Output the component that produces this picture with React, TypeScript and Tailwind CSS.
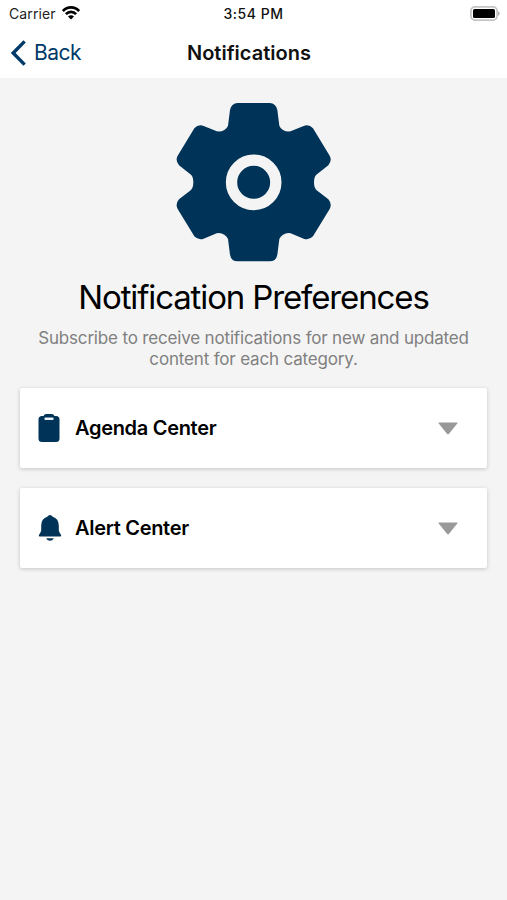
import type { ReactNode } from 'react';

interface CategoryCardProps {
  icon: ReactNode;
  label: string;
}

function StatusBar() {
  return (
    <div className="relative flex h-[28px] items-center justify-between pl-[9px] pr-[7px]">
      <div className="flex items-center gap-[6px]">
        <span className="text-[14px] leading-[20px] tracking-[0.12px] text-[#222]">Carrier</span>
        <svg className="-mt-[2px]" width="18" height="14" viewBox="0 0 18 14" fill="none" stroke="#000" strokeWidth="2.6">
          <path d="M0.9 5C5.4 0.2 12.6 0.2 17.1 5" />
          <path d="M3.9 8.2C6.8 5.1 11.2 5.1 14.1 8.2" />
          <path d="M9 13.6L6 10.6C7.7 8.8 10.3 8.8 12 10.6Z" fill="#000" stroke="none" />
        </svg>
      </div>
      <span className="absolute left-1/2 -translate-x-1/2 whitespace-nowrap text-[14px] font-medium leading-[20px] tracking-[0.5px] text-[#111]">
        3:54 PM
      </span>
      <svg className="-mt-[2px]" width="30" height="15" viewBox="0 0 30 15">
        <rect x="0.9" y="0.9" width="26.2" height="13.2" rx="4" fill="#fff" stroke="#c4c4c4" strokeWidth="1.8" />
        <rect x="3" y="3" width="22" height="9" rx="1.5" fill="#000" />
        <path d="M28 5.2C30.2 5.8 30.2 9.2 28 9.8Z" fill="#b0b0b0" />
      </svg>
    </div>
  );
}

function GearIcon() {
  return (
    <svg width="156" height="160" viewBox="33 20 468 480" fill="#003358">
      <path d="M218 23H314Q333 24 337 44L343 91Q346 99 354 104Q369 113 384 105L416 92Q432 86 444 99L494 181Q502 196 490 210L454 238Q447 245 447 261Q447 277 454 284L490 312Q502 326 494 341L444 423Q432 436 416 430L384 417Q369 409 354 418Q346 423 343 431L337 478Q333 498 314 498H218Q199 498 195 478L189 431Q186 423 178 418Q163 409 148 417L116 430Q100 436 88 423L38 341Q30 326 42 312L78 284Q85 277 85 261Q85 245 78 238L42 210Q30 196 38 181L88 99Q100 86 116 92L148 105Q163 113 178 104Q186 99 189 91L195 44Q199 24 218 23Z" />
      <circle cx="266" cy="261" r="66.5" fill="none" stroke="#f4f4f4" strokeWidth="34" />
    </svg>
  );
}

function ClipboardIcon() {
  return (
    <svg width="22" height="28" viewBox="0 0 22 28">
      <path d="M4 2H5.5Q6.5 0 8 0H14Q15.5 0 16.5 2H18Q21.5 2 21.5 5.5V24.5Q21.5 28 18 28H4Q0.5 28 0.5 24.5V5.5Q0.5 2 4 2Z" fill="#003358" />
      <rect x="6.5" y="3.4" width="9" height="2.6" rx="0.8" fill="#e8f2fa" />
    </svg>
  );
}

function BellIcon() {
  return (
    <svg width="24" height="28" viewBox="0 0 24 28" fill="#003358">
      <path d="M12 1Q13.8 1 14.4 2.6Q20.8 4.8 20.8 11.5V16.5Q21 18.3 22.8 20.4Q24 22.4 21.6 22.4H2.4Q0 22.4 1.2 20.4Q3 18.3 3.2 16.5V11.5Q3.2 4.8 9.6 2.6Q10.2 1 12 1Z" />
      <path d="M8.2 24.2H15.8Q14.7 26.8 12 26.8Q9.3 26.8 8.2 24.2Z" />
    </svg>
  );
}

function CategoryCard({ icon, label }: CategoryCardProps) {
  return (
    <button className="flex h-[80px] w-full items-center rounded-[2px] bg-white pl-[18px] pr-[29px] shadow-[0_1px_4px_rgba(0,0,0,0.2)]">
      <span className="flex w-[37px] shrink-0 items-center">{icon}</span>
      <span className="text-[20px] font-semibold leading-[26px] tracking-[-0.3px] text-black">{label}</span>
      <svg className="ml-auto" width="20" height="13" viewBox="0 0 20 13" fill="#999">
        <path d="M1 0.5H19Q20 0.7 19.3 1.6L10.8 12Q10 12.8 9.2 12L0.7 1.6Q0 0.7 1 0.5Z" />
      </svg>
    </button>
  );
}

export default function App() {
  return (
    <div className="flex h-[900px] w-[507px] flex-col overflow-hidden bg-[#f4f4f4] font-['Inter',sans-serif]">
      <header className="h-[78px] shrink-0 bg-white">
        <StatusBar />
        <div className="relative flex h-[49px] items-center pl-[11px]">
          <button className="flex items-center gap-[8px] text-[#003a68]">
            <svg width="15" height="26" viewBox="0 0 15 26" fill="none" stroke="#003a68" strokeWidth="3.4">
              <path d="M13.6 1.4L2.2 13L13.6 24.6" />
            </svg>
            <span className="text-[21px] leading-[26px] tracking-[-0.5px]">Back</span>
          </button>
          <h1 className="absolute left-[249px] -translate-x-1/2 whitespace-nowrap text-[20px] font-semibold leading-[26px] tracking-[0.02px] text-[#111]">
            Notifications
          </h1>
        </div>
      </header>

      <main className="flex flex-col items-center px-5 pt-[24px]">
        <GearIcon />
        <h2 className="mt-[14px] whitespace-nowrap text-[33px] leading-[42px] tracking-[-1.13px] text-black">
          Notification Preferences
        </h2>
        <p className="mt-[10px] whitespace-nowrap text-center text-[17px] leading-[21px] tracking-[-0.17px] text-[#808080]">
          Subscribe to receive notifications for new and updated
          <br />
          content for each category.
        </p>
        <div className="mt-[18px] flex w-full flex-col gap-5">
          <CategoryCard icon={<ClipboardIcon />} label="Agenda Center" />
          <CategoryCard icon={<BellIcon />} label="Alert Center" />
        </div>
      </main>
    </div>
  );
}
